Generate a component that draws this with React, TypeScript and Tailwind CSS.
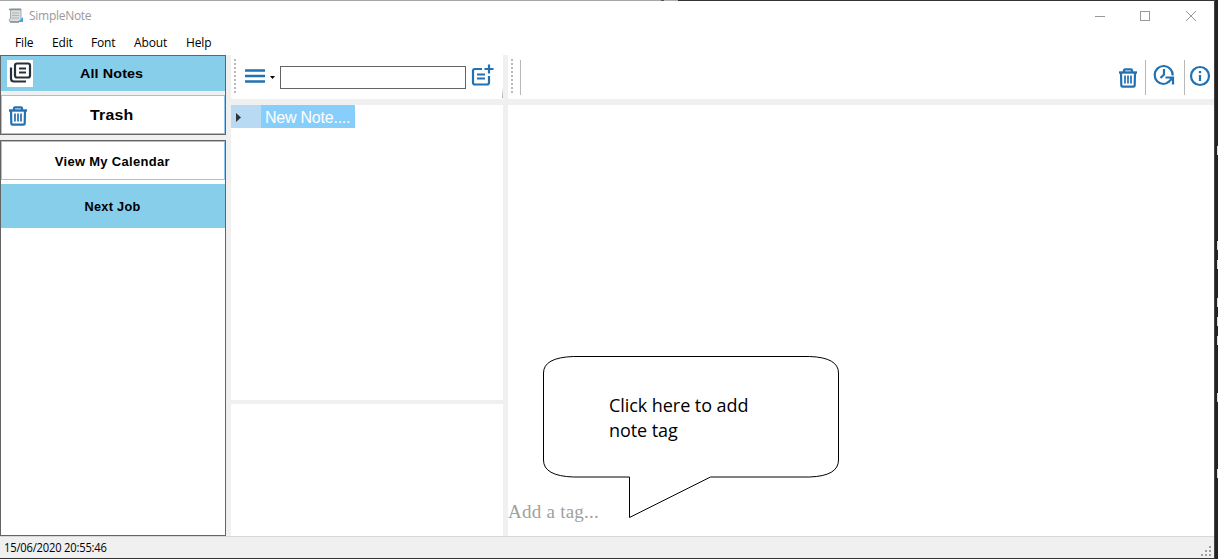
import React from "react";

function TrashIcon() {
  return (
    <svg width="20" height="21" viewBox="0 0 20 21" fill="none" stroke="#2271b3" strokeWidth="2" className="shrink-0">
      <path d="M1 5.500H19" strokeWidth="2.400" />
      <path d="M6 5V3.500Q6 2.300 7 2.300H13Q14 2.300 14 3.500V5M3 5.500L3.300 18.500Q3.300 19.700 4.500 19.700H15.500Q16.700 19.700 16.700 18.500L17 5.500" strokeWidth="2.200" />
      <path d="M7 8.500V16.500M10 8.500V16.500M13 8.500V16.500" strokeWidth="1.700" />
    </svg>
  );
}

function NotesIcon() {
  return (
    <svg width="26" height="27" viewBox="0 0 26 27" fill="none" stroke="#25303b" strokeWidth="2.200" className="shrink-0 bg-white">
      <rect x="8" y="3.500" width="15" height="14" rx="2" />
      <path d="M4 7.500V18.500Q4 21.500 7 21.500H19M12 8.500H19M12 12.500H19" />
    </svg>
  );
}

function AddNoteIcon() {
  return (
    <svg width="23" height="23" viewBox="0 0 23 23" fill="none" stroke="#2271b3" strokeWidth="2.200">
      <path d="M11 5H4Q2 5 2 7V18.500Q2 20.500 4 20.500H16Q18 20.500 18 18.500V12" />
      <path d="M6 10.500H14M6 14.500H14M13.500 5H22.500M18 .5V9.500" />
    </svg>
  );
}

function HistoryIcon() {
  return (
    <svg width="22" height="22" viewBox="0 0 22 22" fill="none" stroke="#2271b3" strokeWidth="2.200">
      <path d="M16 17.500Q13.500 20 10.500 20A9 9 0 1 1 19.700 11.500" />
      <path d="M11 5V10.500L7.500 14" />
      <path d="M12.500 13.500H20V20.500" />
      <path d="M16 13.500H20V18Z" fill="#2271b3" stroke="none" />
      <path d="M19.500 14L15 18.500" />
    </svg>
  );
}

function InfoIcon() {
  return (
    <svg width="22" height="22" viewBox="0 0 22 22" fill="none" stroke="#2271b3" strokeWidth="2.200">
      <circle cx="11" cy="11" r="9" />
      <path d="M11 10V16M11 6V8.200" />
    </svg>
  );
}

function AppIcon() {
  return (
    <svg width="16" height="17" viewBox="0 0 16 17">
      <path d="M2.500 2H13V13L11 15H2L1 13L2.500 11Z" fill="#d9dddf" stroke="#a5abae" />
      <path d="M1 2.500H13" stroke="#8a9296" strokeWidth="1.500" />
      <path d="M4 6H11M4 8.500H11M3 11H11" stroke="#aeb4b7" />
      <path d="M10 15L15 10V15Z" fill="#42a5e5" />
      <path d="M2 15H11" stroke="#6d777d" />
    </svg>
  );
}

function Grip() {
  return (
    <svg width="2" height="35" viewBox="0 0 2 35" shapeRendering="crispEdges" className="shrink-0">
      <path d="M1 0V35" stroke="#b8b8b8" strokeWidth="2" strokeDasharray="2 2" />
    </svg>
  );
}

function TitleBar() {
  return (
    <header className="flex h-[29px] shrink-0 items-center pl-2">
      <AppIcon />
      <span className="ml-[5px] font-['Open_Sans',sans-serif] text-[12px] tracking-[-0.280px] text-[#999]">SimpleNote</span>
      <svg className="ml-auto mr-[17px]" width="103" height="12" viewBox="0 0 103 12" fill="none" stroke="#999">
        <path d="M1 6.500H11" />
        <rect x="46.500" y="1.500" width="9" height="9" />
        <path d="M92 1L102 11M102 1L92 11" />
      </svg>
    </header>
  );
}

function MenuBar() {
  return (
    <nav className="flex h-[25px] shrink-0 items-center pl-[15px] font-['Open_Sans',sans-serif] text-[12px] leading-4 tracking-[-0.150px] text-black">
      <span className="w-[37px]">File</span>
      <span className="w-[39px]">Edit</span>
      <span className="w-[43px]">Font</span>
      <span className="w-[52px]">About</span>
      <span>Help</span>
    </nav>
  );
}

function Sidebar() {
  return (
    <aside className="flex w-[226px] shrink-0 flex-col gap-[5px] font-['Liberation_Sans',sans-serif] font-bold text-black">
      <div className="flex h-20 shrink-0 flex-col justify-between border border-[#646464] bg-[#f0f0f0]">
        <button className="flex h-[35px] items-center bg-[#87ceeb] pl-[6px] text-left">
          <NotesIcon />
          <span className="ml-[47px] origin-left scale-x-[1.080] text-[13.300px] tracking-[0.100px]">All Notes</span>
        </button>
        <button className="flex h-[39px] items-center border border-[#8fc9f3] bg-white pl-[6px] pt-[2px] text-left">
          <TrashIcon />
          <span className="ml-[62px] origin-left scale-x-[1.060] text-[15px] tracking-[0.200px]">Trash</span>
        </button>
      </div>
      <div className="flex flex-1 flex-col gap-1 border border-[#646464] bg-white">
        <button className="h-[39px] border border-[#8fc9f3] pr-[2px] pt-[2px] text-[12px] tracking-[0.300px]">
          <span className="inline-block scale-x-[1.080]">View My Calendar</span>
        </button>
        <button className="h-11 bg-[#87ceeb] pr-[1px] pt-[2px] text-[12px] tracking-[0.300px]">
          <span className="inline-block scale-x-[1.060]">Next Job</span>
        </button>
      </div>
    </aside>
  );
}

function NoteList() {
  return (
    <section className="flex w-[272px] shrink-0 flex-col">
      <div className="flex h-11 shrink-0 items-start rounded-b-[2px] bg-white pl-[3px] pt-[4px]">
        <Grip />
        <svg className="ml-[9px] mt-[9px]" width="20" height="16" viewBox="0 0 20 16">
          <path d="M0 2.500H20M0 8H20M0 13.500H20" stroke="#2271b3" strokeWidth="2.300" />
        </svg>
        <svg className="ml-[5px] mt-[17px]" width="5" height="3" viewBox="0 0 5 3"><path d="M0 0H5L2.500 3Z" /></svg>
        <input aria-label="Search" className="ml-[5px] mt-[7px] h-[23px] w-[186px] border border-[#646464] bg-white outline-none" />
        <div className="ml-[5px] mt-[5px]"><AddNoteIcon /></div>
        <span className="ml-auto mt-7 h-[11px] w-px bg-gradient-to-b from-white to-[#aaa]" />
      </div>
      <div className="mt-[6px] h-[295px] bg-white">
        <div className="flex h-[23px] w-[124px] bg-[#87cefa] text-white">
          <div className="flex w-[30px] items-center bg-[#b8daf2] pl-[5px] pt-[2px]">
            <svg width="5" height="9" viewBox="0 0 5 9"><path d="M0 0L5 4.500L0 9Z" fill="#333" /></svg>
          </div>
          <span className="whitespace-nowrap pl-1 font-['Liberation_Sans',sans-serif] text-[16px] leading-[26px] tracking-[-0.230px]">New Note....</span>
        </div>
      </div>
      <div className="mt-1 flex-1 bg-white" />
    </section>
  );
}

function Callout() {
  return (
    <div className="absolute left-[34px] top-[250px] h-[164px] w-[298px]">
      <svg width="298" height="164" viewBox="0 0 298 164" fill="white" stroke="black" className="absolute inset-0">
        <path d="M31.500 1.500H267.500Q296.500 2.500 296.500 18V105Q296.500 121 267.500 122H168.500L87.500 162.500V122H31.500Q1.500 121 1.500 105V18Q1.500 2.500 31.500 1.500Z" />
      </svg>
      <p className="relative pl-[67px] pt-[38px] font-['Open_Sans',sans-serif] text-[18px] leading-[25px] tracking-[-0.060px] text-black">
        Click here to add<br />note tag
      </p>
    </div>
  );
}

function Editor() {
  return (
    <main className="flex flex-1 flex-col">
      <div className="flex h-11 shrink-0 items-start rounded-b-[2px] bg-white pl-[3px] pt-[4px]">
        <Grip />
        <span className="ml-[7px] mt-px h-[35px] w-px bg-[#b8b8b8]" />
        <div className="ml-auto flex items-start">
          <div className="mt-[8px] mr-[7px]"><TrashIcon /></div>
          <span className="mt-px h-[35px] w-px bg-[#b8b8b8]" />
          <div className="ml-[7px] mt-[5px]"><HistoryIcon /></div>
          <span className="ml-[9px] mt-px h-[35px] w-px bg-[#b8b8b8]" />
          <div className="ml-[4px] mr-[3px] mt-[6px]"><InfoIcon /></div>
        </div>
      </div>
      <div className="relative mt-[6px] flex flex-1 flex-col justify-end bg-white">
        <Callout />
        <span className="pb-[12px] font-['Liberation_Serif',serif] text-[19px] leading-6 tracking-[0.250px] text-[#a0a0a0]">Add a tag...</span>
      </div>
    </main>
  );
}

function StatusBar() {
  return (
    <footer className="flex h-[22px] shrink-0 items-center justify-between border-t border-[#d7d7d7] bg-[#f0f0f0] pl-1 font-['Open_Sans',sans-serif] text-[12px] text-black">
      <span className="origin-left scale-x-[0.930] tracking-[-0.200px]">15/06/2020 20:55:46</span>
      <svg width="10" height="10" viewBox="0 0 10 10" className="mr-[3px] mt-[6px]" shapeRendering="crispEdges">
        <path d="M8 0h2v2h-2zM4 4h2v2h-2zM8 4h2v2h-2zM0 8h2v2h-2zM4 8h2v2h-2zM8 8h2v2h-2z" fill="#a0a0a0" />
      </svg>
    </footer>
  );
}

function Backdrop() {
  return (
    <div className="flex w-1 shrink-0 justify-end border-l border-[#444] bg-[#222424]">
      <svg width="1" height="559" viewBox="0 0 1 559">
        <path d="M.5 146v9M.5 241v9M.5 260v9M.5 298v9M.5 317v9M.5 336v9M.5 393v9M.5 469v9" stroke="#ddd" />
      </svg>
    </div>
  );
}

export default function App() {
  return (
    <div className="flex h-[559px] w-[1218px] overflow-hidden">
      <div className="flex w-[1214px] shrink-0 flex-col border-b border-[#333] bg-white">
        <div className="flex h-px shrink-0 bg-[#333]">
          <span className="w-[661px] bg-[#a6a6a6]" />
          <span className="w-[3px] bg-[#555]" />
          <span className="w-[14px] bg-[#aab0b5]" />
        </div>
        <TitleBar />
        <MenuBar />
        <div className="flex flex-1 gap-[5px] bg-[#f0f0f0]">
          <Sidebar />
          <NoteList />
          <Editor />
        </div>
        <StatusBar />
      </div>
      <Backdrop />
    </div>
  );
}
